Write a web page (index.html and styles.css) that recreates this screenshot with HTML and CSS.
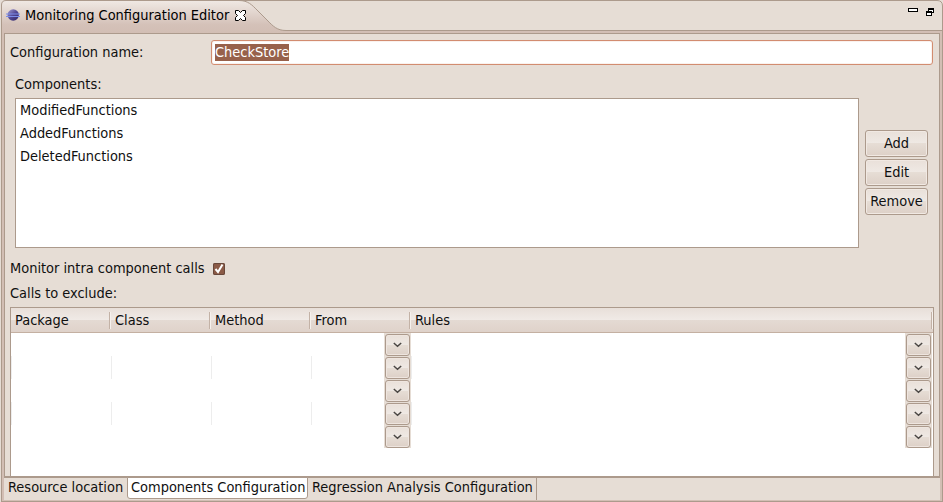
FILE: index.html
```
<!DOCTYPE html>
<html lang="en">
<head>
<meta charset="utf-8">
<title>Monitoring Configuration Editor</title>
<link rel="stylesheet" href="styles.css">
</head>
<body>
<svg class="defs" width="0" height="0">
  <symbol id="chevron" viewBox="0 0 9 6"><path d="M.8 1 L4.500 4.300 L8.200 1" fill="none" stroke="#4a4643" stroke-width="1.5"/></symbol>
</svg>
<div class="window">
  <header class="titlebar">
    <svg class="tab-shape" width="942" height="33" viewBox="0 0 942 33">
      <defs>
        <linearGradient id="tab" x1="0" y1="0" x2="0" y2="1"><stop offset="0" stop-color="#f0e9e4"/><stop offset=".75" stop-color="#d4c1b8"/><stop offset="1" stop-color="#d2beb4"/></linearGradient>
        <linearGradient id="ball" x1="0" y1="0" x2="1" y2="1"><stop offset="0" stop-color="#a4a0d4"/><stop offset=".5" stop-color="#534895"/><stop offset="1" stop-color="#30245f"/></linearGradient>
      </defs>
      <path d="M0 33V5Q0 .5 5 .5H238C247 .5 251 5 256 10L267 21C272 26 276 30.500 285 30.500H942V33Z" fill="url(#tab)"/>
      <path d="M.5 33V5Q.5 .5 5 .5H238C247 .5 251 5 256 10L267 21C272 26 276 30.500 285 30.500H941" fill="none" stroke="#ac9a8c"/>
      <path d="M238 .500H936Q941.500 .500 941.500 6V33" fill="none" stroke="#ac9a8c"/>
    </svg>
    <svg class="logo" width="14" height="14" viewBox="0 0 14 14"><circle cx="7.200" cy="7" r="5.700" fill="url(#ball)"/><path d="M0 6h14M0 8.500h14" stroke="#7c8eea" stroke-width="1.200"/></svg>
    <span class="title">Monitoring Configuration Editor</span>
    <svg class="close" width="11" height="11" viewBox="0 0 11 11"><path d="M.5.500h3l2 2 2-2h3v3l-2 2 2 2v3h-3l-2-2-2 2h-3v-3l2-2-2-2z" fill="#fff" stroke="#000"/></svg>
    <svg class="controls" width="28" height="9" viewBox="0 0 28 9" shape-rendering="crispEdges"><g fill="#fff" stroke="#000"><path d="M.5.500h9v3h-9z"/><path d="M20.500.500h5v4h-5zM20 1.500h6M18.500 3.500h5v4h-5zM18 4.500h6" /></g></svg>
  </header>
  <main class="editor">
    <section class="form">
      <div class="name-row"><label>Configuration name:</label><div class="field"><span>CheckStore</span></div></div>
      <div class="components-label">Components:</div>
      <div class="components">
        <ul class="list"><li>ModifiedFunctions</li><li>AddedFunctions</li><li>DeletedFunctions</li></ul>
        <div class="actions"><button>Add</button><button>Edit</button><button>Remove</button></div>
      </div>
      <div class="check-row"><span>Monitor intra component calls</span><span class="check"><svg width="12" height="12" viewBox="0 0 12 12"><path d="M2.500 6 5 9 9.500 1.500" fill="none" stroke="#fff" stroke-width="2"/></svg></span></div>
      <div class="exclude-label">Calls to exclude:</div>
      <div class="table">
        <div class="head"><span>Package</span><span>Class</span><span>Method</span><span>From</span><span>Rules</span></div>
        <div class="row"><i></i><i></i><i></i><i class="from"><b><svg><use href="#chevron"/></svg></b></i><i class="rules"><b><svg><use href="#chevron"/></svg></b></i></div>
        <div class="row lined"><i></i><i></i><i></i><i class="from"><b><svg><use href="#chevron"/></svg></b></i><i class="rules"><b><svg><use href="#chevron"/></svg></b></i></div>
        <div class="row"><i></i><i></i><i></i><i class="from"><b><svg><use href="#chevron"/></svg></b></i><i class="rules"><b><svg><use href="#chevron"/></svg></b></i></div>
        <div class="row lined"><i></i><i></i><i></i><i class="from"><b><svg><use href="#chevron"/></svg></b></i><i class="rules"><b><svg><use href="#chevron"/></svg></b></i></div>
        <div class="row"><i></i><i></i><i></i><i class="from"><b><svg><use href="#chevron"/></svg></b></i><i class="rules"><b><svg><use href="#chevron"/></svg></b></i></div>
      </div>
    </section>
    <nav class="pages"><span class="p1">Resource location</span><span class="p2">Components Configuration</span><span class="p3">Regression Analysis Configuration</span></nav>
  </main>
</div>
</body>
</html>
```
FILE: styles.css
```
*, *::before, *::after { box-sizing: border-box; }
body { margin: 0; width: 943px; height: 502px; overflow: hidden; background: #e6ddd5; color: #101010; font: 14.45px/16px "DejaVu Sans Condensed", "DejaVu Sans", sans-serif; font-stretch: semi-condensed; white-space: nowrap; }
.defs { position: absolute; }
.window { height: 502px; margin-left: 1px; display: flex; flex-direction: column; }
.titlebar { height: 33px; flex: none; display: flex; position: relative; padding-left: 5px; }
.tab-shape { position: absolute; left: 0; top: 0; }
.logo, .title, .close, .controls { position: relative; flex: none; }
.logo { margin-top: 8px; }
.title { margin: 7px 0 0 5px; width: 204px; color: #000; }
.close { margin: 10px 0 0 6px; }
.controls { margin: 8px 7px 0 auto; }
.editor { flex: 1; border: solid #ac9a8c; border-width: 0 1px 1px; background: #d2beb4; padding: 0 2px 1px; display: flex; flex-direction: column; }
.form { height: 445px; border: 1px solid #ac9a8c; border-bottom-width: 2px; background: #e6ddd5; padding: 6px 5px 0; }
.name-row { display: flex; height: 25px; }
.name-row label { width: 201px; padding-top: 4px; }
.field { width: 722px; border: 1px solid #d28c70; border-radius: 3px; background: #fff; padding: 3px 3px; box-shadow: inset 0 0 0 1px #faf2ee; }
.field span { display: inline-block; height: 17px; line-height: 17px; background: #97614b; color: #fff; }
.components-label { margin: 11px 0 0 5px; height: 22px; }
.components { display: flex; padding-left: 5px; height: 150px; }
.list { width: 844px; height: 150px; margin: 0; padding: 0 4px; border: 1px solid #ac9a8c; background: #fff; list-style: none; }
.list li { height: 23px; padding-top: 3px; }
.actions { display: flex; flex-direction: column; gap: 2px; margin: 32px 0 0 6px; }
button { border: 1px solid #ac9a8c; border-radius: 3px; background: linear-gradient(#e9e0d9, #efe9e4 49%, #e6ddd5 50%, #ddd0c7); box-shadow: inset 0 0 0 1px #f1e9e3; width: 63px; height: 27px; margin: 0; padding: 0 0 2px; font: inherit; color: inherit; }
.check-row { display: flex; margin-top: 12px; height: 25px; }
.check-row > span:first-child { width: 203px; }
.check { width: 12px; height: 12px; margin-top: 3px; border-radius: 2px; background: #8b5a46; box-shadow: inset 0 0 0 1px #68473a; }
.check svg { display: block; }
.exclude-label { height: 22px; }
.table { width: 924px; height: 169px; border: 1px solid #ac9a8c; border-bottom: 0; background: #fff; }
.head { height: 25px; display: flex; background: linear-gradient(#e8dfd9, #f0eae6 49%, #e4dad3 50%, #dfd2ca); border-bottom: 1px solid #c4b0a2; }
.head span { position: relative; width: 100px; padding: 4px 0 0 4px; }
.head span:last-child { width: 522px; }
.head span::after { content: ""; position: absolute; right: 0; top: 4px; width: 2px; height: 17px; border-left: 1px solid #c3b2a6; background: #f6f1ed; }
.row { display: flex; height: 23px; }
.row i { width: 100px; }
.lined i { border-left: 1px solid #ededed; }
.row .rules { width: 521px; }
.row .from, .row .rules { display: flex; justify-content: flex-end; }
.row b { width: 27px; height: 23px; border: 1px solid #e6ddd5; background: #e6ddd5; position: relative; flex: none; display: flex; align-items: center; justify-content: center; }
.row b::before { content: ""; position: absolute; inset: 0 0 -1px; border: 1px solid #ac9a8c; border-radius: 3px; background: linear-gradient(#e9e0d9, #efe9e4 49%, #e6ddd5 50%, #ddd0c7); box-shadow: inset 0 0 0 1px #eee5df; }
.row b svg { position: relative; width: 9px; height: 6px; }
.pages { height: 22px; display: flex; background: #e6ddd5; }
.pages span { padding: 1px 0 0 4px; }
.pages .p1 { width: 123px; }
.pages .p2 { width: 181px; height: 22px; margin-top: -1px; padding-left: 3px; background: #fff; border: 1px solid #ac9a8c; border-radius: 0 0 3px 3px; }
.pages .p3 { width: 229px; border-right: 1px solid #ac9a8c; }
```
